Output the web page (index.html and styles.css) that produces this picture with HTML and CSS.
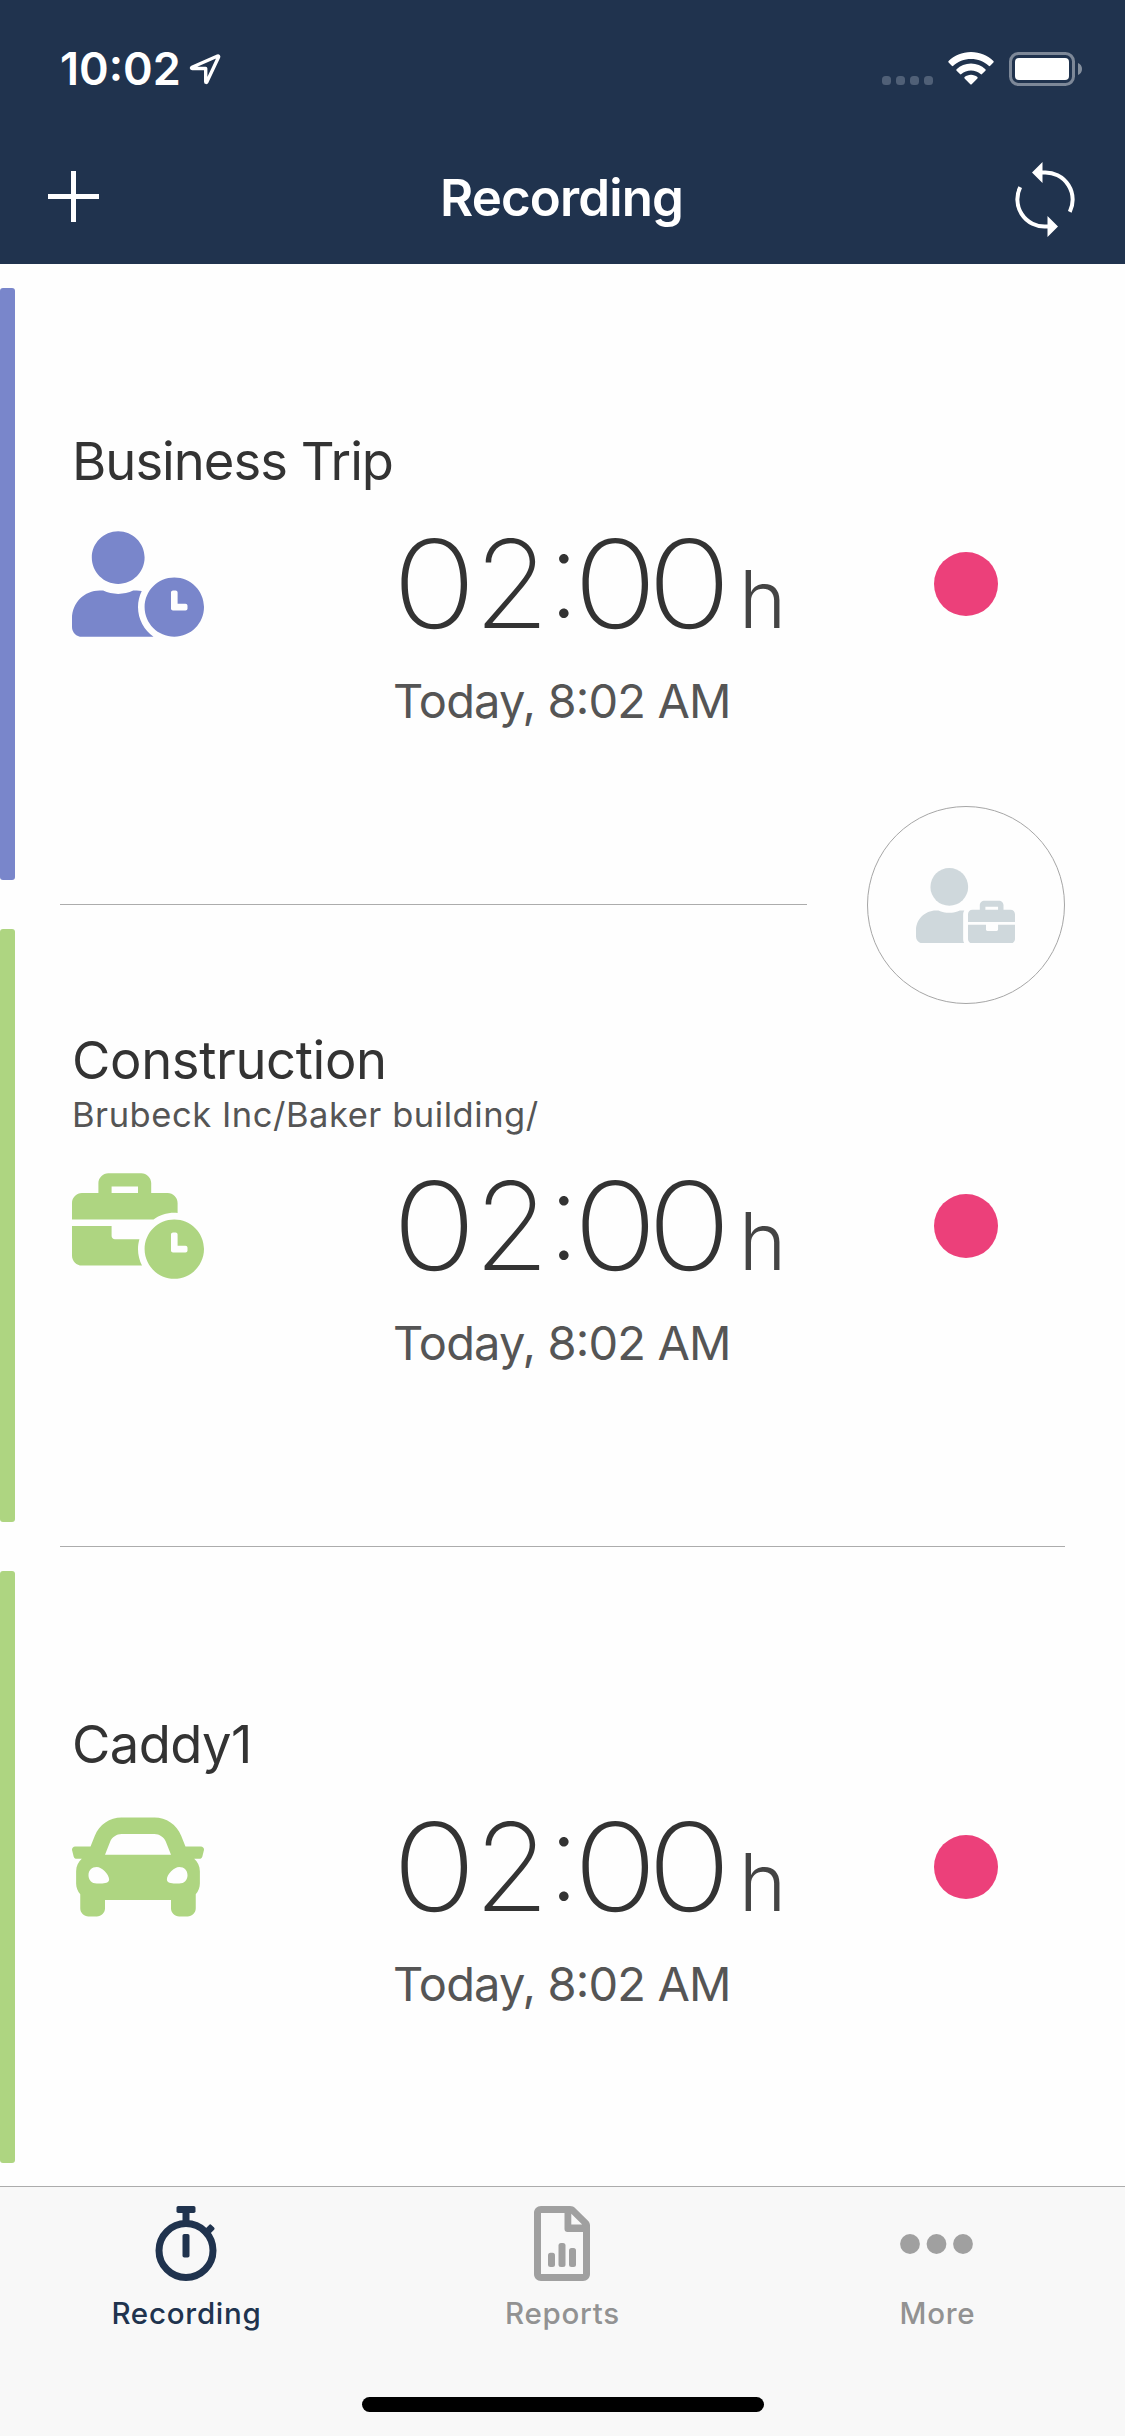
FILE: index.html
```html
<!DOCTYPE html>
<html lang="en">
<head>
<meta charset="utf-8">
<title>Recording</title>
<link rel="stylesheet" href="styles.css">
</head>
<body>
<svg class="defs" aria-hidden="true">
  <symbol id="user-clock" viewBox="0 0 640 512"><path d="M496 224c-79.6 0-144 64.4-144 144s64.4 144 144 144 144-64.4 144-144-64.4-144-144-144zm64 150.3c0 5.3-4.4 9.7-9.7 9.7h-60.6c-5.3 0-9.7-4.4-9.7-9.7v-76.6c0-5.3 4.4-9.7 9.7-9.7h12.6c5.3 0 9.7 4.4 9.7 9.7V352h38.3c5.3 0 9.7 4.4 9.7 9.7v12.6zM320 368c0-27.8 6.7-54.1 18.2-77.5-8-1.5-16.2-2.5-24.6-2.5h-16.7c-22.2 10.2-46.9 16-72.9 16s-50.6-5.8-72.9-16h-16.7C60.2 288 0 348.2 0 422.4V464c0 26.5 21.5 48 48 48h347.1c-45.3-31.9-75.1-84.5-75.1-144zm-96-112c70.7 0 128-57.3 128-128S294.7 0 224 0 96 57.3 96 128s57.3 128 128 128z"/></symbol>
  <symbol id="business-time" viewBox="0 0 640 512"><path d="M496 224c-79.59 0-144 64.41-144 144s64.41 144 144 144 144-64.41 144-144-64.41-144-144-144zm64 150.29c0 5.34-4.37 9.71-9.71 9.71h-60.57c-5.34 0-9.71-4.37-9.71-9.71v-76.57c0-5.34 4.37-9.71 9.71-9.71h12.57c5.34 0 9.71 4.37 9.71 9.71V352h38.29c5.34 0 9.71 4.37 9.71 9.71v12.58zM496 192c5.4 0 10.72.33 16 .81V144c0-25.6-22.4-48-48-48h-80V48c0-25.6-22.4-48-48-48H176c-25.6 0-48 22.4-48 48v48H48c-25.6 0-48 22.4-48 48v80h395.12c28.6-20.09 63.35-32 100.88-32zM320 96H192V64h128v32zm6.82 224H208c-8.84 0-16-7.16-16-16v-48H0v144c0 25.6 22.4 48 48 48h291.43C327.1 423.96 320 396.82 320 368c0-16.66 2.48-32.72 6.82-48z"/></symbol>
  <symbol id="car" viewBox="0 0 512 512"><path d="M499.99 176h-59.87l-16.64-41.6C406.38 91.63 365.57 64 319.5 64h-127c-46.06 0-86.88 27.63-103.99 70.4L71.87 176H12.01C4.2 176-1.53 183.34.37 190.91l6 24C7.7 220.25 12.5 224 18.01 224h20.07C24.65 235.73 16 252.78 16 272v48c0 16.12 6.16 30.67 16 41.93V416c0 17.67 14.33 32 32 32h32c17.67 0 32-14.33 32-32v-32h256v32c0 17.67 14.33 32 32 32h32c17.67 0 32-14.33 32-32v-54.07c9.84-11.25 16-25.8 16-41.93v-48c0-19.22-8.65-36.27-22.07-48H494c5.51 0 10.31-3.75 11.64-9.09l6-24c1.89-7.57-3.84-14.91-11.65-14.91zm-352.06-17.83c7.29-18.22 24.94-30.17 44.57-30.17h127c19.63 0 37.28 11.95 44.57 30.17L384 208H128l19.93-49.83zM96 319.8c-19.2 0-32-12.76-32-31.9S76.8 256 96 256s48 28.71 48 47.85-28.8 15.95-48 15.95zm320 0c-19.2 0-48 3.19-48-15.95S396.8 256 416 256s32 12.76 32 31.9-12.8 31.9-32 31.9z"/></symbol>
</svg>

<header class="header">
  <div class="status">
    <span class="status-time">10:02</span>
    <svg class="location" width="32" height="32" viewBox="0 0 32 32"><path d="M28.6 3 3 14.3c-.9.4-.6 1.2.3 1.2h13.4v13.2c0 .9.8 1 1.2.2L29.6 4c.3-.8-.2-1.3-1-1z"/></svg>
    <div class="signal"><i></i><i></i><i></i><i></i></div>
    <svg class="wifi" width="46" height="34" viewBox="0 0 46 34">
      <path d="M23 0C14 0 6.2 3.5.6 9.1c-.5.5-.5 1 0 1.5l3.2 3.2c.5.5 1 .5 1.5 0C9.900 9.600 16 7 23 7s13.100 2.600 17.700 6.800c.5.5 1 .5 1.500 0l3.200-3.200c.5-.5.5-1 0-1.500C39.800 3.500 32 0 23 0z"/>
      <path d="M23 11.600c-5.600 0-10.600 2.100-14.400 5.600-.5.5-.5 1 0 1.500l3.400 3.400c.4.4 1 .4 1.400 0 2.600-2.200 5.900-3.500 9.600-3.500s7 1.300 9.600 3.500c.4.4 1 .4 1.400 0l3.400-3.400c.5-.5.5-1 0-1.500-3.800-3.500-8.800-5.600-14.400-5.600z"/>
      <path d="M23 22.800c-2.500 0-4.600.9-6.400 2.300-.4.4-.4.900 0 1.300l5.700 5.900c.4.400 1 .4 1.400 0l5.700-5.900c.4-.4.4-.9 0-1.300-1.800-1.400-3.900-2.300-6.400-2.300z"/>
    </svg>
    <svg class="battery" width="73" height="34" viewBox="0 0 73 34">
      <rect x="1.500" y="1.500" width="63" height="31" rx="8" fill="none" stroke="#fff" stroke-opacity=".42" stroke-width="3"/>
      <rect x="6" y="6" width="54" height="22" rx="4"/>
      <path d="M69 11c2.500 1 4 3.300 4 6s-1.500 5-4 6z" fill-opacity=".45"/>
    </svg>
  </div>
  <div class="navbar">
    <svg class="plus" width="51" height="51" viewBox="0 0 51 51"><path d="M23 0h5v51h-5zM0 23h51v5H0z"/></svg>
    <h1>Recording</h1>
    <svg class="sync" width="60" height="75" viewBox="0 0 60 75">
      <path d="M27 10.500h3A27.200 27.200 0 0 1 54.800 49.800M33 64.500h-3A27.200 27.200 0 0 1 5.200 25.200" fill="none" stroke="#fff" stroke-width="4"/>
      <path d="M17 10.500 27.500 0v21zM43 64.500 32.500 54v21z"/>
    </svg>
  </div>
</header>

<main class="list">
  <section class="entry entry-indigo">
    <div class="head"><h2 class="tight">Business Trip</h2></div>
    <div class="body">
      <svg class="kind" width="132" height="106"><use href="#user-clock"/></svg>
      <div class="clock"><b class="wide">0</b><b class="two">2</b><b class="colon">:</b><b class="wide">0</b><b class="wide">0</b><span>h</span></div>
      <div class="dot"></div>
    </div>
    <p class="since">Today, 8<span>:</span>02 AM</p>
    <div class="rule rule-short"></div>
    <div class="switch">
      <svg width="99" height="75.500" viewBox="0 0 672 512">
        <circle cx="226" cy="128" r="128"/>
        <path d="M328 288h-30c-22.200 10.200-46.900 16-72.900 16s-50.600-5.800-72.900-16h-16.700C60.200 288 0 348.200 0 422.400V464c0 26.500 21.500 48 48 48h280c-6-9-8-18-8-28V318c0-12 2-21 8-30z"/>
        <path fill-rule="evenodd" d="M353 367v-54c0-17 13-30 30-30h50v-29c0-18 14-32 32-32h97c18 0 32 14 32 32v29h48c17 0 30 13 30 30v54zM471 283h86v-21h-86z"/>
        <path d="M353 385h122v33c0 6 4 10 10 10h62c6 0 10-4 10-10v-33h115v97c0 17-13 30-30 30H383c-17 0-30-13-30-30z"/>
      </svg>
    </div>
  </section>

  <section class="entry entry-green entry-tall">
    <div class="head"><h2 class="loose">Construction</h2><p class="path">Brubeck Inc/Baker building/</p></div>
    <div class="body">
      <svg class="kind" width="132" height="106"><use href="#business-time"/></svg>
      <div class="clock"><b class="wide">0</b><b class="two">2</b><b class="colon">:</b><b class="wide">0</b><b class="wide">0</b><span>h</span></div>
      <div class="dot"></div>
    </div>
    <p class="since">Today, 8<span>:</span>02 AM</p>
    <div class="rule"></div>
  </section>

  <section class="entry entry-green">
    <div class="head"><h2>Caddy1</h2></div>
    <div class="body">
      <svg class="kind" width="132" height="132"><use href="#car"/></svg>
      <div class="clock"><b class="wide">0</b><b class="two">2</b><b class="colon">:</b><b class="wide">0</b><b class="wide">0</b><span>h</span></div>
      <div class="dot"></div>
    </div>
    <p class="since">Today, 8<span>:</span>02 AM</p>
  </section>
</main>

<footer class="tabbar">
  <nav class="tabs">
    <div class="tab tab-active">
      <svg width="62" height="75" viewBox="0 0 62 75">
        <circle cx="31" cy="44.500" r="27" fill="none" stroke="currentColor" stroke-width="7"/>
        <rect x="21.500" y="0" width="19" height="7" rx="1.800"/>
        <path d="M27.500 5h7v12h-7z"/>
        <rect x="27.500" y="28" width="7" height="23.500" rx="1.800"/>
        <rect x="50" y="18.500" width="7" height="12" rx="1.600" transform="rotate(45 53.500 24.500)"/>
      </svg>
      <span>Recording</span>
    </div>
    <div class="tab">
      <svg width="56" height="75" viewBox="0 0 56 75">
        <path fill-rule="evenodd" d="M7 0h29c2.200 0 4 .8 5.300 2.200L54 14.800c1.300 1.300 2 3 2 5V68c0 4-3 7-7 7H7c-4 0-7-3-7-7V7c0-4 3-7 7-7zM7 7v61h42V26H33.500c-1.800 0-3-1.200-3-3V7zm30.300.8v10.700h10.900z"/>
        <rect x="14" y="46.700" width="7" height="14.300" rx="2.500"/>
        <rect x="24.500" y="37" width="7" height="24" rx="2.500"/>
        <rect x="35" y="42" width="7" height="19" rx="2.500"/>
      </svg>
      <span>Reports</span>
    </div>
    <div class="tab">
      <svg width="73" height="75" viewBox="0 0 73 75"><circle cx="10" cy="38" r="9.900"/><circle cx="36.500" cy="38" r="9.900"/><circle cx="63" cy="38" r="9.900"/></svg>
      <span>More</span>
    </div>
  </nav>
  <div class="home"></div>
</footer>
</body>
</html>
```
FILE: styles.css
```css
* { box-sizing: border-box; }
body {
  margin: 0;
  width: 1125px;
  height: 2436px;
  display: flex;
  flex-direction: column;
  background: #fefefe;
  color: #333;
  font-family: "Inter", "Liberation Sans", sans-serif;
}
h1, h2, p { margin: 0; font-weight: 400; }
svg { display: block; fill: currentColor; flex: none; }
.defs { display: none; }

/* Header */
.header { height: 264px; background: #20334e; color: #fff; }
.status {
  height: 138px;
  padding: 0 43px 0 60px;
  display: flex;
  align-items: center;
}
.status-time { font-size: 45px; font-weight: 600; line-height: 60px; }
.location { margin-left: 8px; fill: none; stroke: #fff; stroke-width: 3.4; stroke-linejoin: round; }
.signal { display: flex; gap: 5px; margin: 23px 15px 0 auto; }
.signal i { width: 9px; height: 9px; border-radius: 3.5px; background: #506077; }
.battery { margin-left: 15px; }
.navbar {
  height: 126px;
  padding: 0 50px 3px 48px;
  display: grid;
  grid-template-columns: 60px 1fr 60px;
  align-items: center;
}
.plus { margin-bottom: 6px; }
.navbar h1 {
  margin-bottom: 3px;
  font-size: 51px;
  font-weight: 600;
  line-height: 60px;
  letter-spacing: -.88px;
  text-align: center;
}

/* Entries */
.list { height: 1922px; flex: none; }
.entry { position: relative; height: 641px; }
.entry-tall { height: 642px; }
.entry-indigo { --accent: #7986cb; }
.entry-green { --accent: #aed581; }
.entry::before {
  content: "";
  position: absolute;
  left: 0;
  top: 24px;
  width: 15px;
  height: 592px;
  border-radius: 3px;
  background: var(--accent);
}
.entry-tall::before { height: 593px; }
.head {
  height: 227px;
  padding-left: 72px;
  display: flex;
  flex-direction: column;
  justify-content: flex-end;
}
.head h2 {
  font-size: 52.500px;
  line-height: 60px;
  letter-spacing: -.6px;
}
.head .tight { letter-spacing: -1px; }
.head .loose { letter-spacing: -.35px; }
.path {
  margin-top: 7px;
  font-size: 34.500px;
  line-height: 35px;
  letter-spacing: .55px;
  color: #555;
}
.body {
  height: 174px;
  margin-top: 6px;
  padding-left: 72px;
  display: grid;
  grid-template-columns: 320px 542px 64px;
  align-items: center;
}
.entry-tall .body { height: 175px; }
.kind { color: var(--accent); }
.clock {
  display: flex;
  align-items: baseline;
  height: 120px;
  font-size: 122px;
  line-height: 120px;
}
.clock b { font-weight: 200; }
.clock .wide { width: 74px; transform: scaleX(1.147); transform-origin: left; }
.clock .two { width: 73px; margin-left: 8px; }
.clock .colon { width: 30px; margin-right: -4px; text-align: center; transform: translateY(-11px); }
.clock span {
  margin-left: 18px;
  font-size: 80px;
  font-weight: 300;
  line-height: 80px;
  color: #444;
}
.dot { width: 64px; height: 64px; border-radius: 50%; background: #ec407a; }
.since {
  padding-left: 393px;
  font-size: 47px;
  line-height: 60px;
  letter-spacing: -.85px;
  color: #555;
}
.since span { line-height: 0; vertical-align: 4px; }
.rule {
  position: absolute;
  left: 60px;
  right: 60px;
  bottom: 0;
  height: 1px;
  background: #acacac;
}
.rule-short { right: 318px; }
.switch {
  position: absolute;
  z-index: 1;
  left: 867px;
  top: 542px;
  width: 198px;
  height: 198px;
  padding: 1px 1px 0 0;
  display: flex;
  align-items: center;
  justify-content: center;
  border: 1px solid #a6a6a6;
  border-radius: 50%;
  background: #fefefe;
  color: #cfd8dc;
}

/* Tab bar */
.tabbar {
  flex: 1;
  padding-top: 19px;
  display: flex;
  flex-direction: column;
  border-top: 1px solid #acacac;
  background: #f8f8f8;
}
.tabs { display: grid; grid-template-columns: repeat(3, 375px); color: #a0a0a0; }
.tab { display: flex; flex-direction: column; align-items: center; }
.tab svg { margin-right: 2px; }
.tab-active svg { margin-right: 4px; }
.tab span {
  margin-top: 12px;
  font-size: 29.500px;
  font-weight: 500;
  line-height: 40px;
  letter-spacing: .75px;
  color: #929292;
}
.tab-active, .tab-active span { color: #20334e; }
.tab-active span { margin-right: 2px; }
.home {
  width: 402px;
  height: 15px;
  margin: auto auto 24px;
  border-radius: 8px;
  background: #000;
}
```
